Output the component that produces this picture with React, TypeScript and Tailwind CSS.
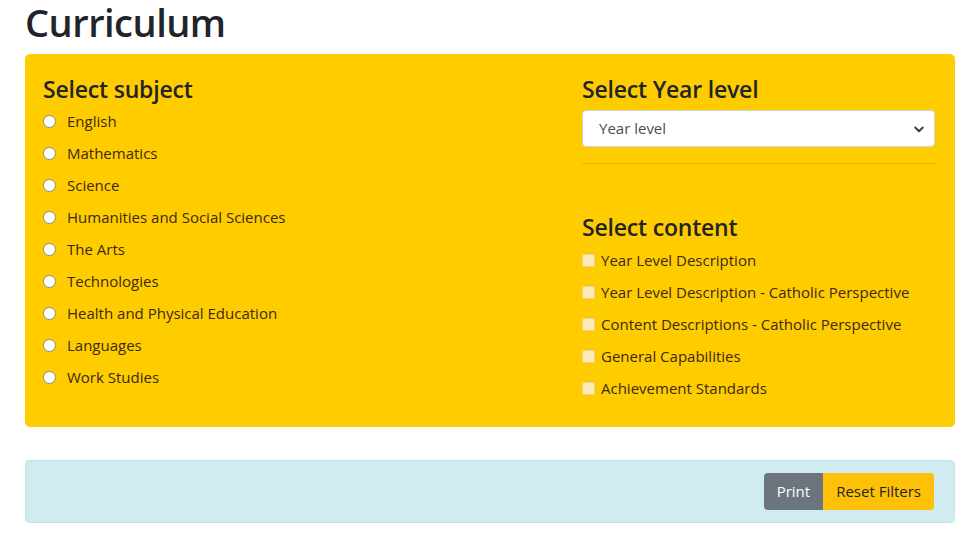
const subjects = [
  "English",
  "Mathematics",
  "Science",
  "Humanities and Social Sciences",
  "The Arts",
  "Technologies",
  "Health and Physical Education",
  "Languages",
  "Work Studies",
];

const contents = [
  "Year Level Description",
  "Year Level Description - Catholic Perspective",
  "Content Descriptions - Catholic Perspective",
  "General Capabilities",
  "Achievement Standards",
];

export default function App() {
  return (
    <div
      className="min-h-[550px] bg-white pl-[25px] pr-[23px] text-[#212529]"
      style={{ fontFamily: '"Open Sans", "Noto Sans", sans-serif' }}
    >
      <h1 className="h-[54px] text-[38px] font-semibold leading-[45px] tracking-[-0.5px]">Curriculum</h1>

      <div className="flex rounded-[5px] bg-[#ffcc00] pb-[23px] pl-[18px] pr-[19px] pt-[20px]">
        <div className="flex-1">
          <h4 className="h-[31px] text-[23px] font-semibold leading-[30px] tracking-[-0.2px]">Select subject</h4>
          <div className="flex flex-col">
            {subjects.map((s) => (
              <label key={s} className="flex h-[32px] items-center gap-[11px] text-[15px] text-[#3b2a14]">
                <span className="h-[13px] w-[13px] rounded-full border border-[#8a8a8a] bg-white" />
                {s}
              </label>
            ))}
          </div>
        </div>

        <div className="w-[354px]">
          <h4 className="h-[32px] text-[23px] font-semibold leading-[30px] tracking-[-0.2px]">Select Year level</h4>
          <div className="mt-[4px] flex h-[37px] w-[353px] items-center justify-between rounded-[4px] border border-[#ced4da] bg-white pl-[16px] pr-[9px] text-[15px] text-[#495057]">
            <span>Year level</span>
            <svg width="12" height="12" viewBox="0 0 16 16" fill="none" stroke="#343a40" strokeWidth="2.5" strokeLinecap="round" strokeLinejoin="round">
              <path d="M3 6l5 5 5-5" />
            </svg>
          </div>
          <div className="mt-[16px] border-t border-[#e6b800]" />

          <h4 className="mt-[48px] h-[32px] text-[23px] font-semibold leading-[30px] tracking-[-0.2px]">Select content</h4>
          <div className="flex flex-col">
            {contents.map((c) => (
              <label key={c} className="flex h-[32px] items-center gap-[6px] text-[15px] text-[#3b2a14]">
                <span className="h-[13px] w-[13px] rounded-[2px] border border-[#e8d58f] bg-[#fcebb6]" />
                {c}
              </label>
            ))}
          </div>
        </div>
      </div>

      <div className="mt-[33px] flex h-[63px] items-center justify-end rounded-[4px] border border-[#bee5eb] bg-[#d1ecf1] pr-[20px]">
        <button className="h-[37px] rounded-l-[4px] bg-[#6c757d] px-[13px] text-[15px] text-white">Print</button>
        <button className="h-[37px] rounded-r-[4px] bg-[#ffc107] px-[13px] text-[15px] text-[#212529]">Reset Filters</button>
      </div>
    </div>
  );
}
